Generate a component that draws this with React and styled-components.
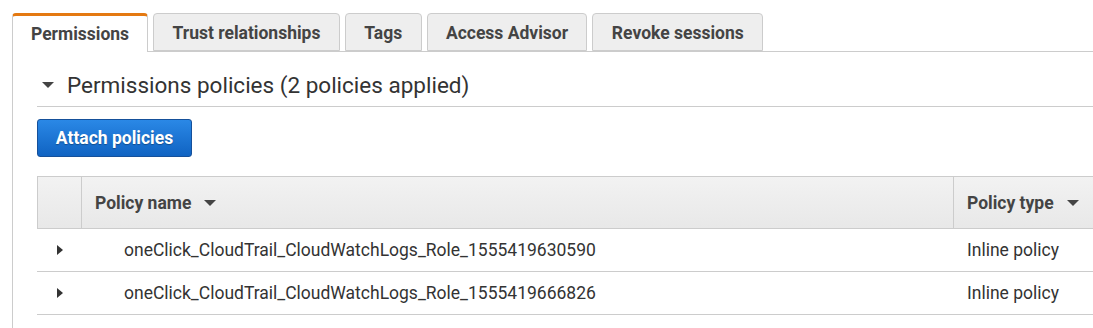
import React from 'react'
import styled, { createGlobalStyle } from 'styled-components';

const Global = createGlobalStyle`
  body {
    margin: 0;
    background: #fff;
    font-family: Roboto, "Liberation Sans", Arial, sans-serif;
    color: #333;
    overflow: hidden;
  }
`

const Page = styled.div`
  padding: 13px 0 0 12px;
  width: 1300px;
`

const TabBar = styled.div`
  display: flex;
  align-items: flex-end;
  gap: 5px;
  border-bottom: 1px solid #ccc;
  height: 38px;
`

const Tab = styled.div`
  box-sizing: border-box;
  height: ${p => (p.$active ? '39px' : '38px')};
  margin-bottom: ${p => (p.$active ? '-1px' : '0')};
  padding: 0 ${p => (p.$active ? '18px' : '18.4px')};
  display: flex;
  align-items: center;
  font-size: 17.5px;
  font-weight: 700;
  color: #444;
  background: ${p => (p.$active ? '#fff' : '#eee')};
  border: 1px solid #ccc;
  border-bottom: ${p => (p.$active ? 'none' : '1px solid #ccc')};
  border-top: ${p => (p.$active ? '3px solid #e47911' : '1px solid #ccc')};
  border-radius: 4px 4px 0 0;
  padding-top: ${p => (p.$active ? '0' : '2px')};
`

const Panel = styled.div`
  border-left: 1px solid #ccc;
  padding: 0 0 20px 24px;
`

const Heading = styled.div`
  display: flex;
  align-items: center;
  gap: 13px;
  padding: 21px 0 9px 5px;
  font-size: 22.5px;
  line-height: 24px;
  color: #333;
  border-bottom: 1px solid #ccc;
`

const Caret = styled.span`
  display: inline-block;
  width: 0;
  height: 0;
  border-left: ${p => p.$size || 6}px solid transparent;
  border-right: ${p => p.$size || 6}px solid transparent;
  border-top: ${p => p.$size || 6}px solid ${p => p.$color || '#444'};
`

const RightCaret = styled.span`
  display: inline-block;
  width: 0;
  height: 0;
  border-top: 5px solid transparent;
  border-bottom: 5px solid transparent;
  border-left: 6px solid #333;
  margin-left: 2px;
`

const Button = styled.button`
  margin-top: 12px;
  height: 38px;
  width: 155px;
  font-family: inherit;
  font-size: 17.5px;
  font-weight: 700;
  color: #fff;
  background: linear-gradient(#2a88e6, #1063c2);
  border: 1px solid #15509a;
  border-radius: 3px;
  text-shadow: 0 1px 1px rgba(0, 0, 0, 0.3);
`

const Table = styled.div`
  margin-top: 19px;
  border-top: 1px solid #ccc;
`

const Row = styled.div`
  display: grid;
  grid-template-columns: 43px 872px 1fr;
  height: ${p => (p.$head ? '51px' : '42px')};
  background: ${p => (p.$head ? 'linear-gradient(#f2f2f2, #e8e8e8)' : '#fff')};
  border-bottom: 1px solid #ccc;
  ${p => p.$head && 'border-left: 1px solid #ccc;'}
`

const Cell = styled.div`
  display: flex;
  align-items: center;
  gap: 13px;
  padding-left: ${p => p.$indent || 13}px;
  font-size: 17.5px;
  font-weight: ${p => (p.$bold ? 700 : 400)};
  color: ${p => (p.$bold ? '#444' : '#333')};
  border-left: ${p => (p.$divider ? '1px solid #ccc' : 'none')};
  ${p => p.$center && 'justify-content: center; padding-left: 0;'}
`

const policies = [
  'oneClick_CloudTrail_CloudWatchLogs_Role_1555419630590',
  'oneClick_CloudTrail_CloudWatchLogs_Role_1555419666826',
]

export default function App() {
  return (
    <Page>
      <Global />
      <TabBar>
        <Tab $active>Permissions</Tab>
        <Tab>Trust relationships</Tab>
        <Tab>Tags</Tab>
        <Tab>Access Advisor</Tab>
        <Tab>Revoke sessions</Tab>
      </TabBar>
      <Panel>
        <Heading>
          <Caret $size={6} />
          Permissions policies (2 policies applied)
        </Heading>
        <Button>Attach policies</Button>
        <Table>
          <Row $head>
            <Cell />
            <Cell $bold $divider>Policy name <Caret $size={6} /></Cell>
            <Cell $bold $divider>Policy type <Caret $size={6} /></Cell>
          </Row>
          {policies.map(name => (
            <Row key={name}>
              <Cell $center><RightCaret /></Cell>
              <Cell $indent={44}>{name}</Cell>
              <Cell $indent={15}>Inline policy</Cell>
            </Row>
          ))}
        </Table>
      </Panel>
    </Page>
  )
}
